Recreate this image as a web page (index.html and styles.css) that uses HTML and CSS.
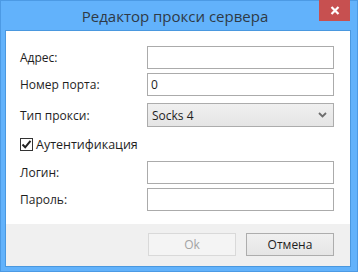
FILE: index.html
```html
<!DOCTYPE html>
<html lang="ru">
  <head>
    <meta charset="UTF-8" />
    <title>Редактор прокси сервера</title>
    <link rel="stylesheet" href="styles.css">
  </head>
  <body>
    <div class="window">
      <div class="titlebar">
        <span class="title">Редактор прокси сервера</span>
        <button class="close" title="Закрыть">
          <svg width="10" height="9" viewBox="0 0 10 9">
            <path d="M1.5 1 L8.5 8 M8.5 1 L1.5 8" fill="none" stroke="#fff" stroke-width="2.2" />
          </svg>
        </button>
      </div>

      <div class="client">
        <div class="form">
          <div class="row">
            <label>Адрес:</label>
            <input type="text" class="field" value="" />
          </div>
          <div class="row">
            <label>Номер порта:</label>
            <input type="text" class="field" value="0" />
          </div>
          <div class="row row-select">
            <label>Тип прокси:</label>
            <div class="select">
              <span>Socks 4</span>
              <svg width="9" height="6" viewBox="0 0 9 6">
                <path d="M1 1 L4.5 4.5 L8 1" fill="none" stroke="#6d6d6d" stroke-width="1.8" />
              </svg>
            </div>
          </div>
          <div class="check-row">
            <span class="checkbox">
              <svg width="11" height="11" viewBox="0 0 11 11">
                <path d="M1.5 5.5 L4.2 8.3 L9.5 1.8" fill="none" stroke="#222" stroke-width="2" />
              </svg>
            </span>
            <span>Аутентификация</span>
          </div>
          <div class="row">
            <label>Логин:</label>
            <input type="text" class="field" value="" />
          </div>
          <div class="row">
            <label>Пароль:</label>
            <input type="password" class="field" value="" />
          </div>
        </div>

        <div class="footer">
          <button class="btn" disabled>Ok</button>
          <button class="btn">Отмена</button>
        </div>
      </div>
    </div>
  </body>
</html>
```

FILE: styles.css
```css
body {
  margin: 0;
  font-family: "Open Sans", "Noto Sans", sans-serif;
  font-size: 12px;
  color: #1e1e1e;
}
.window {
  position: relative;
  width: 358px;
  height: 272px;
  box-sizing: border-box;
  background: #62b2fb;
  border: 1px solid #4c9ae4;
  padding: 0 6px 4px 4px;
  display: flex;
  flex-direction: column;
}
.titlebar {
  height: 29px;
  display: flex;
  align-items: center;
  justify-content: center;
}
.title {
  font-size: 15px;
  color: #2f3a46;
  margin-top: 1px;
  margin-left: -6px;
}
.close {
  position: absolute;
  top: -1px;
  right: 7px;
  width: 31px;
  height: 21px;
  border: none;
  background: #c75050;
  padding: 0;
  display: flex;
  align-items: center;
  justify-content: center;
}
.client {
  flex: 1;
  background: #fff;
  border: 1px solid #4a98df;
  display: flex;
  flex-direction: column;
}
.form {
  flex: 1;
  padding: 15px 16px 0 14px;
}
.row {
  display: flex;
  align-items: center;
  margin-bottom: 4px;
}
.row label {
  width: 127px;
}
.field {
  width: 187px;
  height: 23px;
  box-sizing: border-box;
  border: 1px solid #ababab;
  margin: 0;
  padding: 0 3px;
  font-family: inherit;
  font-size: 12px;
  color: #1e1e1e;
  outline: none;
}
.row-select {
  margin-top: 7px;
}
.select {
  width: 187px;
  height: 24px;
  box-sizing: border-box;
  border: 1px solid #acacac;
  background: linear-gradient(#f0f0f0, #e5e5e5);
  display: flex;
  align-items: center;
  justify-content: space-between;
  padding: 0 6px 0 4px;
}
.check-row {
  display: flex;
  align-items: center;
  gap: 3px;
  margin: 9px 0 8px;
  font-size: 12.5px;
}
.checkbox {
  width: 13px;
  height: 13px;
  box-sizing: border-box;
  border: 1px solid #333;
  display: flex;
  align-items: center;
  justify-content: center;
  background: #fff;
}
.footer {
  height: 41px;
  background: #f0f0f0;
  display: flex;
  justify-content: flex-end;
  align-items: center;
  gap: 10px;
  padding-right: 16px;
  padding-bottom: 1px;
}
.btn {
  width: 88px;
  height: 23px;
  border: 1px solid #adadad;
  background: linear-gradient(#f0f0f0, #e5e5e5);
  font-family: inherit;
  font-size: 12px;
  color: #1e1e1e;
  padding: 0;
}
.btn:disabled {
  border-color: #d9d9d9;
  background: #f4f4f4;
  color: #a3a3a3;
}
```
